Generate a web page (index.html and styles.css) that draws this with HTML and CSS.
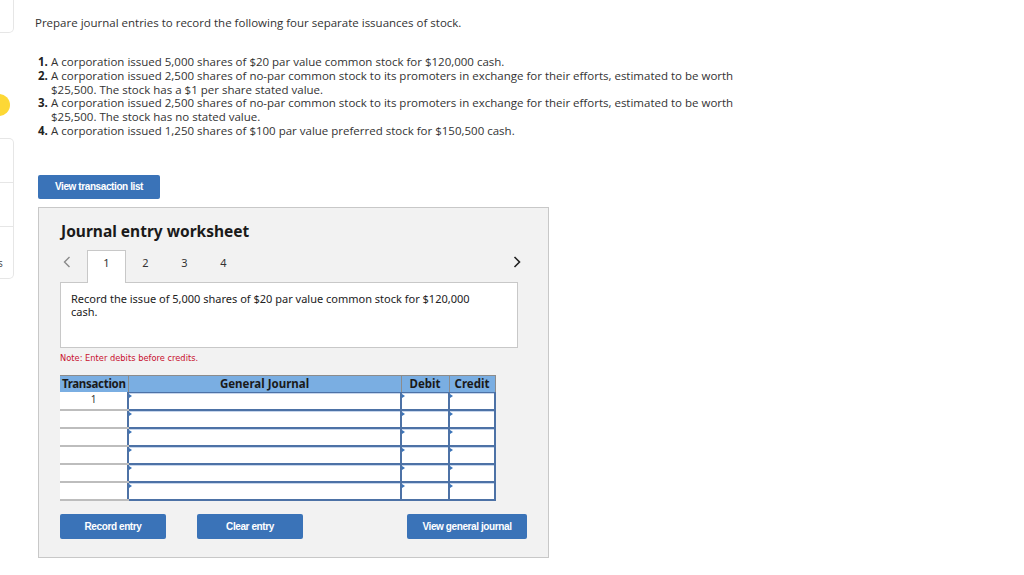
FILE: index.html
```html
<!DOCTYPE html>
<html lang="en">
<head>
    <meta charset="UTF-8">
    <title>Journal entry worksheet</title>
    <link rel="stylesheet" href="styles.css">
</head>
<body>
    <div class="page">
        <div class="side">
            <div class="side-top"></div>
            <div class="side-dot"></div>
            <div class="side-group">
                <div class="side-item"></div>
                <div class="side-item"></div>
                <div class="side-item side-last">s</div>
            </div>
        </div>

        <div class="main">
            <p class="intro">Prepare journal entries to record the following four separate issuances of stock.</p>

            <ol class="tasks">
                <li><b>1.</b><span>A corporation issued 5,000 shares of $20 par value common stock for $120,000 cash.</span></li>
                <li><b>2.</b><span>A corporation issued 2,500 shares of no-par common stock to its promoters in exchange for their efforts, estimated to be worth $25,500. The stock has a $1 per share stated value.</span></li>
                <li><b>3.</b><span>A corporation issued 2,500 shares of no-par common stock to its promoters in exchange for their efforts, estimated to be worth $25,500. The stock has no stated value.</span></li>
                <li><b>4.</b><span>A corporation issued 1,250 shares of $100 par value preferred stock for $150,500 cash.</span></li>
            </ol>

            <button class="btn btn-list">View transaction list</button>

            <div class="worksheet">
                <h2>Journal entry worksheet</h2>

                <div class="tabs">
                    <span class="arrow arrow-prev">
                        <svg width="8" height="12" viewBox="0 0 8 12"><path d="M6.5 1 L1.5 6 L6.5 11" fill="none" stroke="#8a8a8a" stroke-width="1.4"/></svg>
                    </span>
                    <span class="tab active">1</span>
                    <span class="tab">2</span>
                    <span class="tab">3</span>
                    <span class="tab">4</span>
                    <span class="arrow arrow-next">
                        <svg width="8" height="12" viewBox="0 0 8 12"><path d="M1.5 1 L6.5 6 L1.5 11" fill="none" stroke="#222" stroke-width="1.6"/></svg>
                    </span>
                </div>

                <div class="desc">Record the issue of 5,000 shares of $20 par value common stock for $120,000 cash.</div>

                <p class="note">Note: Enter debits before credits.</p>

                <table class="journal">
                    <thead>
                        <tr>
                            <th class="c-tr">Transaction</th>
                            <th class="c-gj">General Journal</th>
                            <th class="c-dr">Debit</th>
                            <th class="c-cr">Credit</th>
                        </tr>
                    </thead>
                    <tbody>
                        <tr><td class="tr">1</td><td class="in"></td><td class="in"></td><td class="in"></td></tr>
                        <tr><td class="tr"></td><td class="in"></td><td class="in"></td><td class="in"></td></tr>
                        <tr><td class="tr"></td><td class="in"></td><td class="in"></td><td class="in"></td></tr>
                        <tr><td class="tr"></td><td class="in"></td><td class="in"></td><td class="in"></td></tr>
                        <tr><td class="tr"></td><td class="in"></td><td class="in"></td><td class="in"></td></tr>
                        <tr><td class="tr"></td><td class="in"></td><td class="in"></td><td class="in"></td></tr>
                    </tbody>
                </table>

                <div class="actions">
                    <button class="btn btn-act">Record entry</button>
                    <button class="btn btn-act">Clear entry</button>
                    <button class="btn btn-act btn-wide">View general journal</button>
                </div>
            </div>
        </div>
    </div>
</body>
</html>
```

FILE: styles.css
```css
* {
    margin: 0;
    padding: 0;
    box-sizing: border-box;
}

body {
    background: #fff;
    font-family: "Open Sans", Lato, sans-serif;
    color: #333;
    overflow: hidden;
}

.page {
    display: flex;
    height: 575px;
}

/* left rail, mostly cut off */
.side {
    width: 14px;
    display: flex;
    flex-direction: column;
}

.side-top {
    height: 39px;
    margin-top: -6px;
    border: 1px solid #e6e6e6;
    border-left: none;
    border-radius: 0 5px 5px 0;
}

.side-dot {
    width: 22px;
    height: 22px;
    margin: 61px 0 0 -12px;
    border-radius: 50%;
    background: #fdd835;
}

.side-group {
    margin-top: 22px;
    height: 141px;
    border: 1px solid #e6e6e6;
    border-left: none;
    border-radius: 0 5px 5px 0;
    display: flex;
    flex-direction: column;
}

.side-item {
    flex: 1;
    border-bottom: 1px solid #e6e6e6;
}

.side-last {
    border-bottom: none;
    font-size: 10px;
    color: #444;
    display: flex;
    align-items: flex-end;
    padding: 0 0 8px 0;
    margin-left: -2px;
}

.main {
    padding: 16px 0 0 21px;
}

.intro {
    font-size: 11.5px;
    line-height: 14px;
    color: #333;
}

.tasks {
    list-style: none;
    margin: 25px 0 0 3px;
    width: 702px;
    font-size: 11.5px;
    line-height: 13.8px;
    color: #333;
}

.tasks li {
    display: grid;
    grid-template-columns: 13px 1fr;
}

.tasks b {
    font-weight: 700;
    color: #222;
}

.btn {
    display: block;
    border: none;
    border-radius: 2px;
    background: #3a73b8;
    color: #fff;
    font-family: "Liberation Sans", Arial, sans-serif;
    font-weight: 700;
    font-size: 10px;
    letter-spacing: -0.4px;
    cursor: pointer;
}

.btn-list {
    margin: 37px 0 0 3px;
    width: 122px;
    height: 24px;
}

.worksheet {
    margin: 8px 0 0 3px;
    width: 511px;
    height: 351px;
    background: #f2f2f2;
    border: 1px solid #c8c8c8;
    padding: 14px 0 0 21px;
    font-family: "Noto Sans", "DejaVu Sans", sans-serif;
}

.worksheet h2 {
    font-size: 15.5px;
    font-weight: 700;
    line-height: 18px;
    color: #1a1a1a;
    margin-left: 1px;
}

.tabs {
    display: flex;
    align-items: stretch;
    width: 458px;
    height: 32px;
    margin-top: 10px;
    font-size: 11px;
    color: #333;
}

.arrow {
    display: flex;
    align-items: center;
    padding-bottom: 8px;
}

.arrow-prev {
    width: 27px;
    padding-left: 3px;
}

.arrow-next {
    margin-left: auto;
    margin-right: -3px;
}

.tab {
    width: 39px;
    display: flex;
    justify-content: center;
    padding-top: 4px;
    border: 1px solid transparent;
    border-bottom: none;
}

.tab.active {
    background: #fff;
    border-color: #c8c8c8;
    position: relative;
    z-index: 1;
    margin-bottom: -1px;
}

.desc {
    width: 458px;
    height: 66px;
    background: #fff;
    border: 1px solid #c8c8c8;
    padding: 9px 40px 0 10px;
    font-size: 11px;
    line-height: 13px;
    color: #222;
}

.note {
    margin-top: 5px;
    font-family: "DejaVu Sans", sans-serif;
    font-size: 8.3px;
    line-height: 10px;
    color: #c8102e;
}

.journal {
    margin-top: 12px;
    width: 435px;
    border-collapse: collapse;
    table-layout: fixed;
}

.journal th {
    height: 17px;
    background: #7aaee2;
    border-top: 1px solid #8c8c8c;
    border-left: 1px solid #8c8c8c;
    border-right: 1px solid #8c8c8c;
    font-size: 11.5px;
    font-weight: 700;
    line-height: 14px;
    color: #1a1a1a;
    padding: 0;
}

.journal th.c-tr {
    border-left: none;
    letter-spacing: -0.3px;
}

.c-tr { width: 68px; }
.c-gj { width: 273px; }
.c-dr { width: 48px; }
.c-cr { width: 46px; }

.journal td {
    height: 18px;
    padding: 0;
}

.journal td.tr {
    background: #fff;
    border-bottom: 2px solid #bdbdbd;
    text-align: center;
    vertical-align: top;
    font-size: 10px;
    line-height: 14px;
    color: #333;
}

.journal td.in {
    position: relative;
    background: #fff;
    border: 2px solid #4d72a6;
    border-top-width: 1px;
    box-shadow: inset 0 1px 0 #c7d6ec;
}

.journal td.in::before {
    content: "";
    position: absolute;
    left: 0;
    top: 1px;
    border-left: 3px solid #3a73b8;
    border-top: 2px solid transparent;
    border-bottom: 2px solid transparent;
}

.actions {
    display: flex;
    margin-top: 13px;
    width: 467px;
}

.btn-act {
    width: 106px;
    height: 25px;
    margin-right: 31px;
}

.btn-wide {
    width: 120px;
    margin-left: auto;
    margin-right: 0;
}
```
